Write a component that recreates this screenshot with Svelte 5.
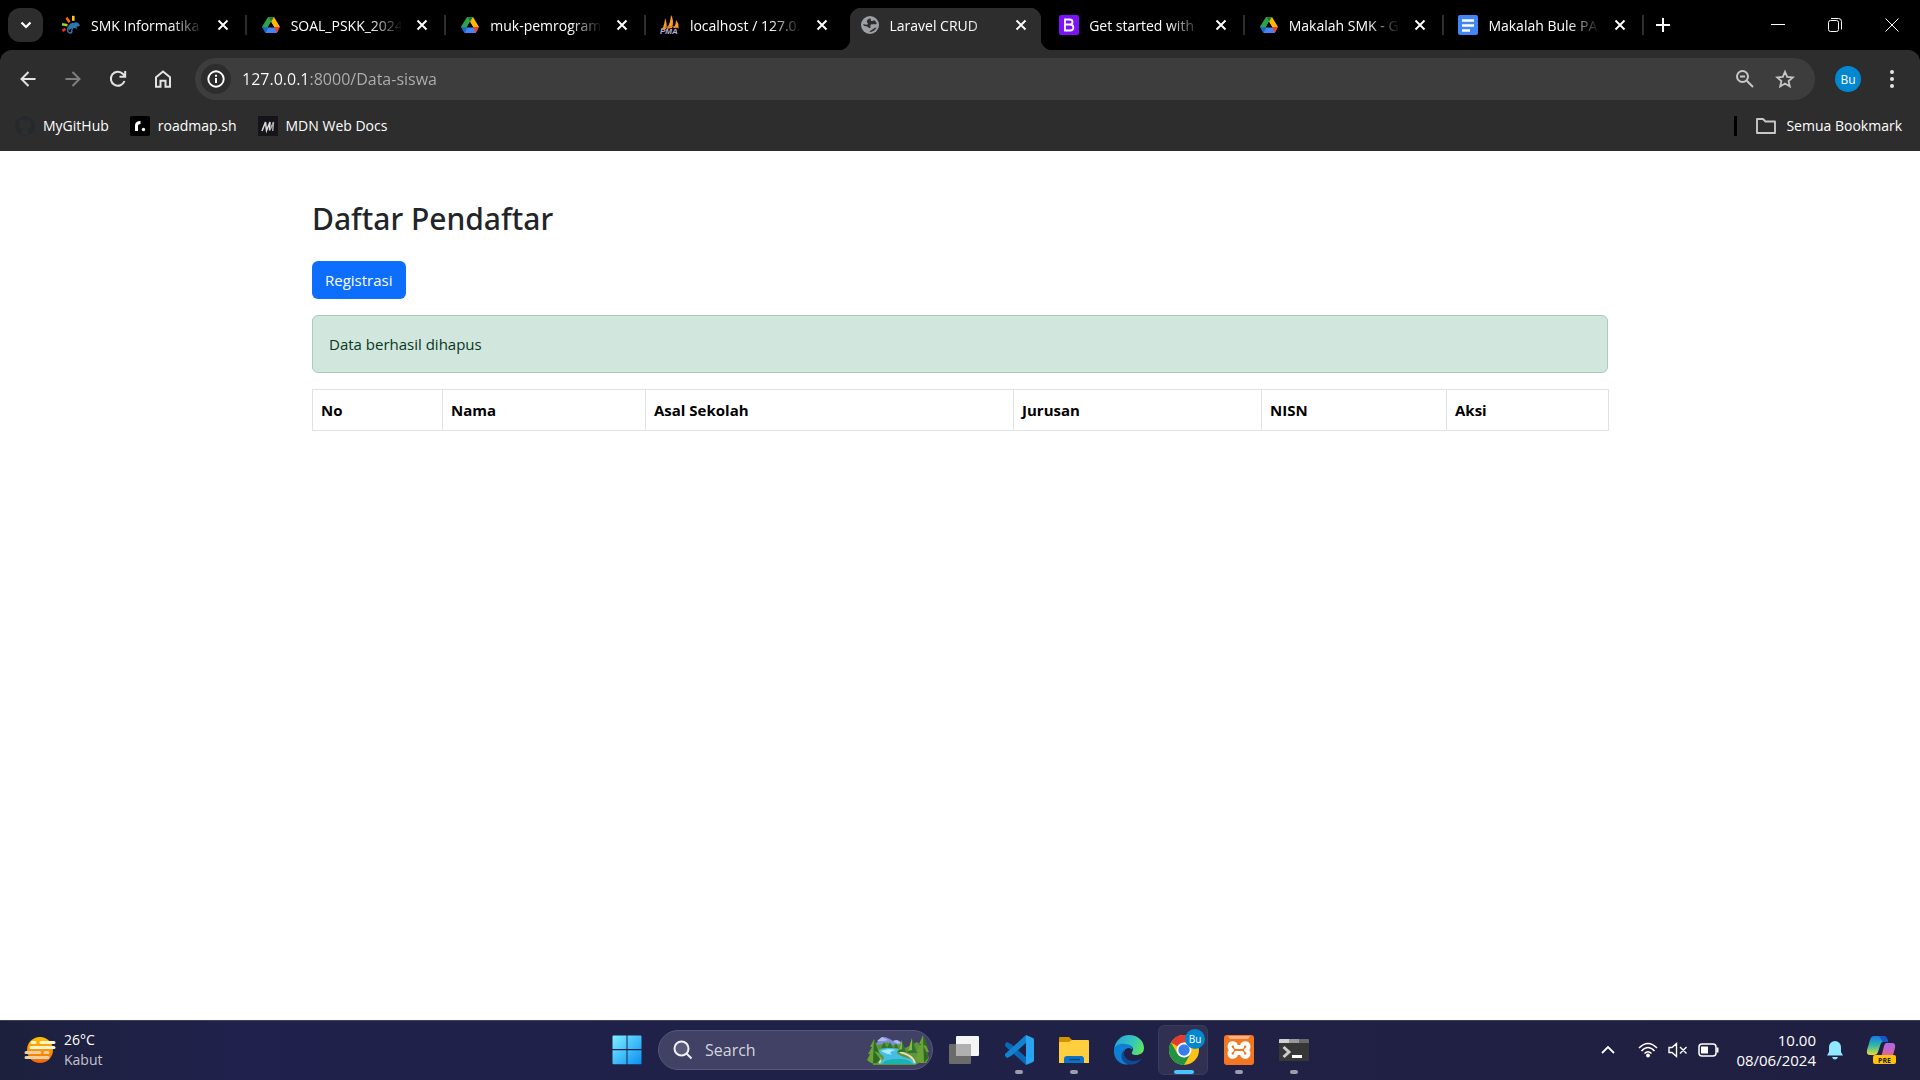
<script>
  let tabs = [
    { icon: "chameleon", title: "SMK Informatika" },
    { icon: "drive", title: "SOAL_PSKK_2024" },
    { icon: "drive", title: "muk-pemrogram" },
    { icon: "pma", title: "localhost / 127.0." },
    { icon: "globe", title: "Laravel CRUD" },
    { icon: "bootstrap", title: "Get started with" },
    { icon: "drive", title: "Makalah SMK - G" },
    { icon: "docs", title: "Makalah Bule PA" },
  ];
  let active = 4;
  let url = "127.0.0.1:8000/Data-siswa";
  let query = "";

  const bookmarks = [
    { icon: "github", title: "MyGitHub" },
    { icon: "roadmap", title: "roadmap.sh" },
    { icon: "mdn", title: "MDN Web Docs" },
  ];

  const columns = [
    { name: "No", width: 130 },
    { name: "Nama", width: 203 },
    { name: "Asal Sekolah", width: 368 },
    { name: "Jurusan", width: 248 },
    { name: "NISN", width: 185 },
    { name: "Aksi", width: 162 },
  ];

  const apps = [
    { name: "Task View", icon: "taskview" },
    { name: "Visual Studio Code", icon: "vscode", open: true },
    { name: "File Explorer", icon: "explorer", open: true },
    { name: "Edge", icon: "edge" },
    { name: "Chrome", icon: "chrome", open: true, current: true },
    { name: "XAMPP", icon: "xampp", open: true },
    { name: "Terminal", icon: "terminal", open: true },
  ];

  function closeTab(i) {
    tabs = tabs.filter((_, index) => index !== i);
    if (i < active) active -= 1;
  }
</script>

<div class="screen">
  <header class="browser">
    <div class="tab-strip">
      <button class="tab-search" aria-label="Search tabs">
        <svg width="16" height="16" viewBox="0 0 16 16"><path d="M3.5 5.5 8 10l4.500-4.500" fill="none" stroke="#fff" stroke-width="2.200" /></svg>
      </button>
      <div class="tabs">
        {#each tabs as tab, i}
          <div class="tab" class:active={i === active} class:before-active={i === active - 1}>
            <button class="tab-main" on:click={() => (active = i)}>
              <svg class="favicon" width="20" height="20" viewBox="0 0 20 20">
                {#if tab.icon === "chameleon"}
                  <g stroke-width="2.600" stroke-linecap="butt">
                    <path d="M12.300 .8v5" stroke="#ffc814" />
                    <path d="m5.500 2.800 3 4.500" stroke="#ff6a10" />
                    <path d="m1 9.300 5.500 1" stroke="#a4d61c" />
                    <path d="m1.500 15.800 3-2" stroke="#f02c2c" />
                  </g>
                  <path d="M7 13c0-3.500 3-5.500 6.500-5.300 2.300-1.200 4.500.2 5.500 3l-3.500 1.300.5 2.500-2-1.500-2 .2.200 2-1.700-1.500c-2 .3-2.500 1.300-1.500 2.700" fill="#2c75ad" />
                  <path d="M7.500 12c-2 3-.5 6 1.500 6s2.600-2.500 1-3" fill="none" stroke="#2c75ad" stroke-width="1.500" />
                {:else if tab.icon === "drive"}
                  <path d="M7 2h6l-3 5-5.500 9.500L1 11.700z" fill="#2ba24c" />
                  <path d="M7 2h6l6 10h-6z" fill="#ffba00" />
                  <path d="M7 2h6l-3 5z" fill="#188038" />
                  <path d="m1 12 3.300 6L7 12.500z" fill="#1967d2" />
                  <path d="M4.300 18h11.400l2.700-5.500H7z" fill="#4285f4" />
                  <path d="M13 12h6l-3.300 6z" fill="#ea4335" />
                  <path d="m10 7-3 5h6z" fill="#000" />
                {:else if tab.icon === "pma"}
                  <path d="M2 14C4 11 5 6 5 3c2 4 2 8 1 11zM6.500 14c3-4 4-9 4.500-14 3 5 2 10 1 13zM13 13c2-2 3-4 3-8 3 4 3 6 2 8z" fill="#f89c2c" />
                  <path d="M1 14c6-3 12-3 18-1" fill="none" stroke="#d77812" />
                  <text x="0" y="19" class="pma-text">PMA</text>
                {:else if tab.icon === "globe"}
                  <circle cx="10" cy="10" r="9" fill="#9aa0a6" />
                  <path d="M10 3.500c1.500 0 0 2 1.500 2.500 1 .3 1.500-1 3-.5 1.500.7 2 2 2.200 3.500-2 1-4.200-.5-5.700.5-1.500 1.200.5 2.500-1 3.500-1 .6-1.500-1-3-1.500C5 11.300 4 11 3 9.500c1.500-.5 3 .5 4.500 0C9 8.500 6 7 7 5.500c.8-1.200 2-2 3-2" fill="#2d2d2d" />
                  <path d="M9.500 17c.5-1.500 2-1.500 3-2.500s2-2 4-2c-1 2.500-4 4.500-7 4.500" fill="#2d2d2d" />
                {:else if tab.icon === "bootstrap"}
                  <rect width="20" height="20" rx="2" fill="#7b12f8" />
                  <path d="M6 4.500h4.500c4 0 4 5 0 5H6zm0 5h5c4.500 0 4.500 6 0 6H6z" fill="none" stroke="#fff" stroke-width="1.800" />
                {:else}
                  <rect width="20" height="20" rx="2" fill="#4285f4" />
                  <path d="M4 5.500h12M4 10.500h12M4 15.500h8" stroke="#fff" stroke-width="2.500" />
                {/if}
              </svg>
              <span class="tab-title">{tab.title}</span>
            </button>
            <button class="tab-close" aria-label="Close tab" on:click={() => closeTab(i)}>
              <svg width="12" height="12" viewBox="0 0 12 12"><path d="m1.500 1.500 9 9m0-9-9 9" stroke="#fff" stroke-width="1.900" /></svg>
            </button>
          </div>
        {/each}
      </div>
      <button class="new-tab" aria-label="New tab">
        <svg width="14" height="14" viewBox="0 0 14 14"><path d="M7 0v14M0 7h14" stroke="#fff" stroke-width="2" /></svg>
      </button>
      <div class="window-controls">
        <button aria-label="Minimize"><svg width="14" height="14" viewBox="0 0 14 14"><path d="M0 6.500h14" stroke="#fff" /></svg></button>
        <button aria-label="Restore">
          <svg width="14" height="16" viewBox="0 0 14 16" fill="none" stroke="#fff">
            <rect x=".5" y="3.500" width="10" height="11" rx="2" />
            <path d="M3 1.500h7.500q3 0 3 3v8" />
          </svg>
        </button>
        <button aria-label="Close"><svg width="14" height="14" viewBox="0 0 14 14"><path d="m.5.5 13 13m0-13-13 13" stroke="#fff" /></svg></button>
      </div>
    </div>

    <div class="toolbar">
      <nav class="nav-buttons">
        <button aria-label="Back"><svg width="20" height="20" viewBox="0 0 20 20"><path d="M17.500 10H3.500m7-7-7 7 7 7" /></svg></button>
        <button aria-label="Forward" disabled><svg width="20" height="20" viewBox="0 0 20 20"><path d="M2.500 10h14m-7-7 7 7-7 7" /></svg></button>
        <button aria-label="Reload"><svg width="20" height="20" viewBox="0 0 20 20"><path d="M16.500 12A7 7 0 1 1 15 5l2 2.500M17.200 2v5.700h-5.700" /></svg></button>
        <button aria-label="Home"><svg width="20" height="20" viewBox="0 0 20 20"><path d="M3 8.200 10 2.500l7 5.700v9.600h-4.500v-6h-5v6H3z" /></svg></button>
      </nav>
      <div class="omnibox">
        <button class="site-info" aria-label="View site information">
          <svg width="18" height="18" viewBox="0 0 18 18">
            <circle cx="9" cy="9" r="7.700" fill="none" stroke="#fff" stroke-width="1.900" />
            <path d="M9 8v5M9 4.700v2" stroke="#fff" stroke-width="2" />
          </svg>
        </button>
        <input class="url" aria-label="Address" bind:value={url} spellcheck="false" />
        <button aria-label="Zoom">
          <svg width="20" height="20" viewBox="0 0 20 20" fill="none" stroke="#c7c7c7" stroke-width="2"><circle cx="7.500" cy="7.500" r="5.500" /><path d="m11.500 11.500 6.500 6.500M5 7.500h5" /></svg>
        </button>
        <button aria-label="Bookmark this tab">
          <svg width="20" height="20" viewBox="0 0 20 20" fill="none" stroke="#c7c7c7" stroke-width="1.800"><path d="m10 2.800 2.200 5.100 5.600.5-4.200 3.700 1.200 5.400L10 14.600l-4.800 2.900 1.200-5.400-4.200-3.700 5.600-.5z" /></svg>
        </button>
      </div>
      <button class="avatar" aria-label="Profile">Bu</button>
      <button class="kebab" aria-label="Menu">
        <svg width="6" height="20" viewBox="0 0 6 20" fill="#e3e3e3"><circle cx="3" cy="3" r="2" /><circle cx="3" cy="10" r="2" /><circle cx="3" cy="17" r="2" /></svg>
      </button>
    </div>

    <nav class="bookmarks">
      {#each bookmarks as bookmark}
        <a href="#{bookmark.icon}">
          <svg width="20" height="20" viewBox="0 0 20 20">
            {#if bookmark.icon === "github"}
              <circle cx="10" cy="10" r="10" fill="#24292e" />
              <path d="M7 19v-3.500c-2 .3-3-.2-3.500-1.800M13 19v-4c0-1-.3-1.500-.7-2 2.500-.3 4-1.500 4-4.500 0-1-.4-2-1-2.600.2-.8.200-1.800-.2-2.500-1 0-2 .6-2.600 1.100a9 9 0 0 0-5 0C6.900 4 5.900 3.400 4.900 3.400c-.4.700-.4 1.700-.2 2.500-.6.600-1 1.600-1 2.600 0 3 1.500 4.200 4 4.500-.5.500-.7 1-.7 2v4z" fill="#2d2d2d" />
            {:else if bookmark.icon === "roadmap"}
              <rect width="20" height="20" rx="2" fill="#000" />
              <path d="M6.500 15V9.500C6.500 7 8 6.500 10.500 6.500" fill="none" stroke="#fff" stroke-width="3" />
              <circle cx="13.500" cy="13.500" r="1.700" fill="#fff" />
            {:else}
              <rect width="20" height="20" fill="#15141a" />
              <path d="m4 15 3.500-9 1 8.500L12 6l-.5 8.500" fill="none" stroke="#ddd" stroke-width="1.500" />
              <path d="m12 14 3.500-8-.8 9" fill="none" stroke="#aaa" stroke-width="1.500" />
            {/if}
          </svg>
          {bookmark.title}
        </a>
      {/each}
      <button class="all-bookmarks">
        <svg width="22" height="20" viewBox="0 0 22 20" fill="none" stroke="#c7c7c7" stroke-width="1.900"><path d="M2 3h6l2.500 2.500H20V17H2z" stroke-linejoin="round" /></svg>
        Semua Bookmark
      </button>
    </nav>
  </header>

  <main>
    <div class="container">
      <h2>Daftar Pendaftar</h2>
      <a class="btn" href="#registrasi">Registrasi</a>
      <div class="alert" role="alert">Data berhasil dihapus</div>
      <table>
        <colgroup>
          {#each columns as column}
            <col style="width: {column.width}px" />
          {/each}
        </colgroup>
        <thead>
          <tr>
            {#each columns as column}
              <th>{column.name}</th>
            {/each}
          </tr>
        </thead>
      </table>
    </div>
  </main>

  <footer class="taskbar">
    <button class="weather">
      <svg width="32" height="30" viewBox="0 0 32 30">
        <defs>
          <linearGradient id="sun" x1="0" y1="0" x2="0" y2="1"><stop offset="0" stop-color="#ffc400" /><stop offset="1" stop-color="#f7630c" /></linearGradient>
        </defs>
        <circle cx="16" cy="15" r="13" fill="url(#sun)" />
        <g stroke-width="3" stroke-linecap="round">
          <path d="M8 7.500h3M17 7.500h13M7 12.500h23" stroke="#fff3d0" />
          <path d="M2 17.500h14M21 17.500h3M2 22.500h22" stroke="#e8d3a0" />
        </g>
      </svg>
      <span class="weather-text"><span>26°C</span><span class="dim">Kabut</span></span>
    </button>

    <div class="task-center">
      <button class="app" aria-label="Start">
        <svg width="30" height="30" viewBox="0 0 30 30">
          <defs>
            <linearGradient id="win" x1="0" y1="0" x2="1" y2="1"><stop offset="0" stop-color="#7df0ff" /><stop offset="1" stop-color="#0a8ff5" /></linearGradient>
          </defs>
          <path d="M1.500.5h13v13.500H.5V1.500a1 1 0 0 1 1-1M15.500.5h13a1 1 0 0 1 1 1V14h-14zM.5 15.300h14v14h-13a1 1 0 0 1-1-1zM15.500 15.300h14v13a1 1 0 0 1-1 1h-13z" fill="url(#win)" />
        </svg>
      </button>

      <label class="search">
        <svg width="20" height="20" viewBox="0 0 20 20" fill="#ffffff22" stroke="#f0f0f5" stroke-width="2"><circle cx="8.500" cy="8.500" r="7" /><path d="m13.500 13.500 5 5" /></svg>
        <input type="text" placeholder="Search" aria-label="Search" bind:value={query} />
        <svg width="62" height="30" viewBox="0 0 62 30">
          <path d="M8 12c2-6 5-9 8-10 4 0 7 2 10 4 6-3 10 2 12 9z" fill="#7f8fd6" />
          <path d="m10 6 5-4 6 3-4 1zM26 6l4-1 4 3-4 1z" fill="#b2b8f0" />
          <path d="M3 17C7 9 11 10 15 9l5-2 5 3 5-1 8 4 12-6 8 8v10l-10 5H6z" fill="#5b963d" />
          <path d="M12 15c7-3 18-2 21 0-6 2-3 4 4 7 7 2 11 3 12 7H12c4-5 7-6 3-9-3-2-4-4-3-5z" fill="#48bde3" />
          <path d="M14 16c5-2 11-2 15-1-6 1-7 3-4 5-4-1-8-2-11-4z" fill="#a6ecfa" />
          <path d="M15 29c4-5 10-5 18-5 5 0 10 1 13 5z" fill="#18b4b0" />
          <path d="M33 17c6 2 13 4 15 11M12 22c2 2 2 4 0 6" stroke="#ecdcae" stroke-width="2" fill="none" />
          <path d="m7 4-4 8h2l-4 7h2l-3 6 4 3h7l3-4-2-6h1zM56 0l-4 9h2l-4 7h2l-4 8 5 4h6l3-5-2-6h2l-3-7h1z" fill="#6aa334" />
          <path d="m7 4 5 14-5-2 6 8-3 4H6zM56 0l5 11-5-1 6 12-5 6z" fill="#2d6a28" />
          <path d="m35 5-4 12h8zM45 3l-5 15h10zM17 7l-3 6h6zM23 7l-3 6h6zM29 8l-2 5h4z" fill="#327431" />
          <path d="m35 5-3 10 3-1zM45 3l-4 13 4-1z" fill="#8bb83f" />
        </svg>
      </label>

      {#each apps as app}
        <button class="app" class:current={app.current} aria-label={app.name}>
          <svg width="30" height="30" viewBox="0 0 30 30">
            {#if app.icon === "taskview"}
              <rect y="9" width="22" height="20" rx="1" fill="#6b6b6b" />
              <rect x="7" y="1" width="23" height="20" rx="1" fill="#f5f5f5" />
              <path d="M7 9h15v12H7z" fill="#b0b0b0" />
            {:else if app.icon === "vscode"}
              <path d="m1 9 2-2 4 2 16 14-1 7L1 11z" fill="#0a68b8" />
              <path d="m1 21 2 2 4-2L23 7l-1-7L1 19z" fill="#1284cf" />
              <path d="m22 0 7 3q1 .5 1 2v20q0 1.500-1 2l-7 3z" fill="#28a4f2" />
            {:else if app.icon === "explorer"}
              <path d="M0 3q0-1 1-1h9l3 3v5H0z" fill="#d69300" />
              <path d="M0 8q0-1 1-1h9l3-2h16q1 0 1 1v22H0z" fill="#ffcf3f" />
              <path d="M5 28v-4q0-3 3-3h14q3 0 3 3v4z" fill="#0c73c6" />
              <path d="M10 24.500h11" stroke="#07477f" stroke-width="1.500" />
            {:else if app.icon === "edge"}
              <defs>
                <linearGradient id="edge-top" x1="0" y1=".3" x2="1" y2=".6"><stop offset="0" stop-color="#24a5e0" /><stop offset=".6" stop-color="#35c8b8" /><stop offset="1" stop-color="#62e45c" /></linearGradient>
              </defs>
              <path d="M0 15C1 6 7 0 15 0c9 0 15 6 15 13 0 5-4 7-8 7-3 0-5-1-4-3 3-4-1-7-5-7C7 9 2 11 0 15z" fill="url(#edge-top)" />
              <path d="M0 15c1-5 6-7 11-6 5 0 8 3 7 6-1-2-4-3-6-1-5 4-1 13 5 14-8 5-18-3-17-13z" fill="#0f7fd4" />
              <path d="M12 14c-5 5 0 12 7 12 4 0 7-1 9-3-4 7-12 8-17 5-5-4-5-11 1-14z" fill="#0d4b95" />
            {:else if app.icon === "chrome"}
              <circle cx="15" cy="15" r="15" fill="#fbc116" />
              <path d="M15 15 2 7.500A15 15 0 0 1 28 7.500H15z" fill="#e33b2e" />
              <path d="M2 7.500 8.500 18.700 15 22.500 21.500 18.700 15 30A15 15 0 0 1 2 7.500" fill="#229342" />
              <circle cx="15" cy="15" r="7.500" fill="#fff" />
              <circle cx="15" cy="15" r="5.700" fill="#3a7cec" />
            {:else if app.icon === "xampp"}
              <rect width="30" height="30" rx="3" fill="#f37623" />
              <path d="M4 1h22l-2 3H6z" fill="#ffb080" />
              <path d="M10 8.500c-5-1-6 5-2 6.500-4 2-3 8 2 6.500 2-.5 2-3 2-3.500h6c0 .5 0 3 2 3.500 5 1.500 6-4.500 2-6.500 4-1.500 3-7.500-2-6.500-2 .5-2 2.500-2 3.500h-6c0-1 0-3-2-3.500z" fill="none" stroke="#fff" stroke-width="4" stroke-linejoin="round" />
            {:else}
              <rect y="4" width="30" height="22" rx="1" fill="#373737" />
              <path d="M0 8V5q0-1 1-1h9v4z" fill="#d0d0d0" />
              <path d="M10 4h10v4H10z" fill="#999" />
              <path d="M20 4h9q1 0 1 1v3H20z" fill="#6a6a6a" />
              <path d="m4.500 12 5.500 5-5.500 5" fill="none" stroke="#ccc" stroke-width="3" />
              <path d="M13 21.500h10" stroke="#fff" stroke-width="3" />
            {/if}
          </svg>
          {#if app.current}<span class="app-badge">Bu</span>{/if}
          {#if app.open}<span class="indicator"></span>{/if}
        </button>
      {/each}
    </div>

    <div class="tray">
      <button class="chevron" aria-label="Show hidden icons"><svg width="14" height="10" viewBox="0 0 14 10"><path d="m1 8 6-6 6 6" fill="none" stroke="#fff" stroke-width="1.800" /></svg></button>
      <button class="status" aria-label="Network, volume and battery">
        <svg width="20" height="16" viewBox="0 0 20 16" fill="none" stroke="#fff" stroke-width="1.500">
          <path d="M1 6Q10-3 19 6M3.500 9Q10 2 16.500 9M6.500 11.500Q10 8 13.500 11.500" />
          <circle cx="10" cy="13.500" r="1.200" fill="#fff" />
        </svg>
        <svg width="20" height="16" viewBox="0 0 20 16" fill="none" stroke="#fff" stroke-width="1.400"><path d="M1 5.500h3L8.500 1.500v13L4 10.500H1zM12 5l6.500 6.500m0-6.500L12 11.500" /></svg>
        <svg width="22" height="14" viewBox="0 0 22 14"><rect x="1" y="1" width="17" height="12" rx="3" fill="none" stroke="#fff" stroke-width="1.500" /><path d="M3 3.500h7v7H3z" fill="#fff" /><path d="M19.500 4.500v5" stroke="#fff" stroke-width="2" /></svg>
      </button>
      <button class="clock"><span>10.00</span><span>08/06/2024</span></button>
      <button class="bell" aria-label="Notifications">
        <svg width="18" height="20" viewBox="0 0 18 20" fill="#91e7ff"><path d="M1 15.500 3 12V7a6 6 0 0 1 12 0v5l2 3.500zM6 17h6q-1 2.500-3 2.500T6 17" /></svg>
      </button>
      <button class="copilot" aria-label="Copilot">
        <svg width="30" height="30" viewBox="0 0 30 30">
          <defs>
            <linearGradient id="cop-a" x1="0" y1="0" x2="0" y2="1"><stop offset="0" stop-color="#1976e8" /><stop offset=".5" stop-color="#30b9a4" /><stop offset="1" stop-color="#eadb35" /></linearGradient>
            <linearGradient id="cop-b" x1="0" y1="0" x2="0" y2="1"><stop offset="0" stop-color="#aa67e8" /><stop offset="1" stop-color="#ef6580" /></linearGradient>
          </defs>
          <path d="M8 1h10q3 0 4 6h-5q-2 0-3 4l-2 6q-1 3-4 3H4q-4 0-3-5L4 5q1-4 4-4" fill="url(#cop-a)" />
          <path d="M13 1h5q3 0 4 6h-5z" fill="#1955c9" />
          <path d="M20 8h6q4 0 3 5l-2 7-2 4H12q3-1 4-5l2-8q1-3 2-3" fill="url(#cop-b)" />
          <rect x="7" y="20" width="23" height="9" rx="2" fill="#ffc20a" />
          <text x="18.500" y="27.500" class="pre-text">PRE</text>
        </svg>
      </button>
    </div>
  </footer>
</div>

<style>
  :global(body) {
    margin: 0;
  }

  .screen {
    display: flex;
    flex-direction: column;
    min-height: 100vh;
    font-family: "Open Sans", "Noto Sans", sans-serif;
    background: #fff;
  }

  button {
    display: flex;
    align-items: center;
    justify-content: center;
    padding: 0;
    border: none;
    background: none;
    color: inherit;
    font: inherit;
  }

  input {
    min-width: 0;
    padding: 0;
    border: none;
    outline: none;
    background: none;
    font: inherit;
  }

  svg {
    flex: none;
    display: block;
  }

  .browser {
    background: #000;
    color: #fff;
    font-size: 14px;
  }

  .tab-strip {
    display: flex;
    height: 50px;
  }

  .tab-search {
    flex: none;
    width: 35px;
    height: 34px;
    margin: 8px 4px 0 8px;
    border-radius: 12px;
    background: #2d2d2d;
  }

  .tabs {
    flex: 0 1 1597px;
    display: flex;
    min-width: 0;
  }

  .tab {
    position: relative;
    flex: 0 1 200px;
    display: flex;
    align-items: center;
    min-width: 0;
    margin-top: 8px;
    padding: 0 14px;
    height: 42px;
    box-sizing: border-box;
  }

  .tab::after {
    content: "";
    position: absolute;
    right: 0;
    top: 7px;
    width: 2px;
    height: 20px;
    background: #2d2d2d;
  }

  .tab.active::after,
  .tab.before-active::after {
    display: none;
  }

  .tab.active::before {
    content: "";
    position: absolute;
    inset: 0 -8px;
    background:
      radial-gradient(circle at 0 0, transparent 12px, #2d2d2d 13px) 0 100% / 12px 12px no-repeat,
      radial-gradient(circle at 100% 0, transparent 12px, #2d2d2d 13px) 100% 100% / 12px 12px no-repeat,
      linear-gradient(#2d2d2d, #2d2d2d) 12px 12px / calc(100% - 24px) 30px no-repeat,
      linear-gradient(#2d2d2d, #2d2d2d) 50% 0 / calc(100% - 48px) 12px no-repeat,
      radial-gradient(circle at 100% 100%, #2d2d2d 12px, transparent 13px) 12px 0 / 12px 12px no-repeat,
      radial-gradient(circle at 0 100%, #2d2d2d 12px, transparent 13px) calc(100% - 12px) 0 / 12px 12px no-repeat;
  }

  .tab-main {
    position: relative;
    flex: 1;
    justify-content: flex-start;
    gap: 10px;
    min-width: 0;
    height: 34px;
    margin-bottom: 8px;
  }

  .tab-title {
    flex: 1;
    overflow: hidden;
    white-space: nowrap;
    text-align: left;
    mask-image: linear-gradient(to right, #000 calc(100% - 32px), transparent);
  }

  .tab-close {
    position: relative;
    flex: none;
    width: 20px;
    height: 20px;
    margin: 0 0 8px 10px;
  }

  .pma-text {
    font: italic 700 8px "Liberation Sans", sans-serif;
    fill: #b4b5dc;
  }

  .new-tab {
    flex: none;
    width: 38px;
  }

  .window-controls {
    display: flex;
    margin-left: auto;
  }

  .window-controls button {
    width: 57px;
  }

  .toolbar {
    display: flex;
    align-items: center;
    padding: 8px 21px 4px 5px;
    border-radius: 12px 12px 0 0;
    background: #2d2d2d;
  }

  .nav-buttons {
    display: flex;
    margin-right: 10px;
  }

  .nav-buttons button {
    width: 45px;
    height: 40px;
  }

  .nav-buttons svg {
    fill: none;
    stroke: #e3e3e3;
    stroke-width: 2;
  }

  .nav-buttons button:disabled {
    opacity: 0.45;
  }

  .omnibox {
    flex: 1;
    display: flex;
    align-items: center;
    gap: 20px;
    height: 42px;
    padding: 0 20px 0 6px;
    border-radius: 21px;
    box-sizing: border-box;
    background: #3d3d3d;
  }

  .site-info {
    width: 30px;
    height: 30px;
    margin-right: -9px;
    border-radius: 50%;
    background: #2d2d2d;
  }

  .url {
    flex: 1;
    height: 24px;
    font-size: 16px;
    color: transparent;
    caret-color: #fff;
    background: linear-gradient(to right, #fff 68px, #b0b0b0 68px);
    background-clip: text;
  }

  .avatar {
    width: 26px;
    height: 26px;
    margin: 0 24px 0 20px;
    border-radius: 50%;
    background: #0288d1;
    font-size: 12px;
  }

  .kebab {
    width: 14px;
    height: 24px;
  }

  .bookmarks {
    display: flex;
    align-items: center;
    gap: 21px;
    height: 47px;
    padding: 0 18px 4px 15px;
    box-sizing: border-box;
    background: #2d2d2d;
  }

  .bookmarks a {
    display: flex;
    align-items: center;
    gap: 8px;
    color: #fff;
    text-decoration: none;
  }

  .all-bookmarks {
    gap: 9px;
    height: 20px;
    margin-left: auto;
    padding-left: 18px;
    border-left: 3px solid #000;
  }

  main {
    flex: 1;
  }

  .container {
    max-width: 1296px;
    margin: 0 auto;
    padding: 48px 12px 0;
    font-size: 15px;
    line-height: 24px;
    color: #212529;
  }

  h2 {
    margin: 0 0 22px;
    font-family: "Noto Sans", "Open Sans", sans-serif;
    font-size: 30px;
    font-weight: 500;
    line-height: 40px;
  }

  .btn {
    display: inline-block;
    padding: 7px 13px;
    border-radius: 6px;
    background: #0d6efd;
    color: #fff;
    text-decoration: none;
    vertical-align: top;
  }

  .alert {
    margin: 16px 0;
    padding: 16px;
    border: 1px solid #a3cfbb;
    border-radius: 6px;
    background: #d1e7dd;
    color: #0a3622;
  }

  table {
    width: 100%;
    table-layout: fixed;
    border-collapse: collapse;
  }

  th {
    padding: 8px;
    border: 1px solid #dee2e6;
    text-align: left;
    color: #000;
  }

  .taskbar {
    display: grid;
    grid-template-columns: 1fr auto 1fr;
    align-items: center;
    height: 60px;
    padding-bottom: 2px;
    box-sizing: border-box;
    border-top: 1px solid #404056;
    background: linear-gradient(to right, #1d203c, #20214c 12%, #202146 60%, #1f1f40);
    color: #fff;
    font-size: 14px;
    line-height: 20px;
  }

  .weather {
    justify-self: start;
    gap: 8px;
    margin-left: 24px;
  }

  .weather-text {
    display: flex;
    flex-direction: column;
    text-align: left;
  }

  .dim {
    color: #c3c3cf;
  }

  .task-center {
    display: flex;
    align-items: center;
  }

  .app {
    position: relative;
    width: 55px;
    height: 50px;
  }

  .app.current::before {
    content: "";
    position: absolute;
    inset: 0 3px 0 2px;
    border: 1px solid #3b3b5c;
    border-radius: 6px;
    box-sizing: border-box;
    background: #303053;
  }

  .app svg {
    position: relative;
  }

  .app-badge {
    position: absolute;
    top: 4px;
    right: 6px;
    width: 20px;
    height: 20px;
    border-radius: 50%;
    background: #0288d1;
    font-size: 10px;
    text-align: center;
  }

  .indicator {
    position: absolute;
    bottom: 1px;
    left: 50%;
    width: 8px;
    height: 4px;
    border-radius: 2px;
    background: #9c9caf;
    transform: translateX(-50%);
  }

  .current .indicator {
    width: 20px;
    background: #4cc2ff;
  }

  .search {
    display: flex;
    align-items: center;
    gap: 12px;
    width: 275px;
    height: 40px;
    margin: 0 3px 0 4px;
    padding: 0 3px 0 14px;
    border: 1px solid #56577a;
    border-radius: 20px;
    box-sizing: border-box;
    background: #404164;
  }

  .search input {
    flex: 1;
    font-size: 16px;
    color: #fff;
  }

  .search input::placeholder {
    color: #d4d4de;
    opacity: 1;
  }

  .tray {
    justify-self: end;
    display: flex;
    align-items: center;
    margin-right: 24px;
  }

  .status {
    gap: 10px;
    margin: 0 18px 0 23px;
  }

  .clock {
    flex-direction: column;
    align-items: flex-end;
    width: 78px;
    font-size: 15px;
  }

  .bell {
    margin: 0 22px 0 10px;
  }

  .pre-text {
    font: 700 7px "Open Sans", sans-serif;
    text-anchor: middle;
    fill: #1b1b1b;
  }
</style>
